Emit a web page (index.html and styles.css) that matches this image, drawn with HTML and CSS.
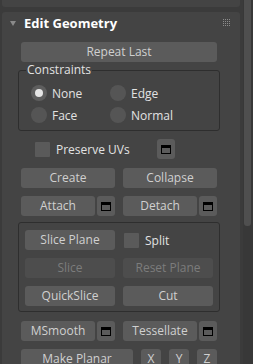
FILE: index.html
```html
<!DOCTYPE html>
<html lang="en">
<head>
  <meta charset="UTF-8">
  <title>Edit Geometry</title>
  <link rel="stylesheet" href="styles.css">
</head>
<body>
  <div class="shell">
    <div class="panels">
      <div class="panel prev"></div>

      <div class="panel">
        <div class="panel-head">
          <span class="arrow"></span>
          <span class="title">Edit Geometry</span>
          <svg class="grip" width="8" height="8" viewBox="0 0 8 8">
            <g fill="#8c8c8c">
              <rect x="0" y="0" width="1" height="1"/><rect x="2" y="0" width="1" height="1"/><rect x="4" y="0" width="1" height="1"/><rect x="6" y="0" width="1" height="1"/>
              <rect x="0" y="2" width="1" height="1"/><rect x="2" y="2" width="1" height="1"/><rect x="4" y="2" width="1" height="1"/><rect x="6" y="2" width="1" height="1"/>
              <rect x="0" y="4" width="1" height="1"/><rect x="2" y="4" width="1" height="1"/><rect x="4" y="4" width="1" height="1"/><rect x="6" y="4" width="1" height="1"/>
              <rect x="0" y="6" width="1" height="1"/><rect x="2" y="6" width="1" height="1"/><rect x="4" y="6" width="1" height="1"/><rect x="6" y="6" width="1" height="1"/>
            </g>
          </svg>
        </div>

        <div class="content">
          <button class="btn full">Repeat Last</button>

          <fieldset class="group constraints">
            <legend>Constraints</legend>
            <div class="radio-grid">
              <label class="radio"><span class="dot on"></span>None</label>
              <label class="radio"><span class="dot"></span>Edge</label>
              <label class="radio"><span class="dot"></span>Face</label>
              <label class="radio"><span class="dot"></span>Normal</label>
            </div>
          </fieldset>

          <div class="row preserve">
            <label class="check"><span class="box"></span>Preserve UVs</label>
            <button class="btn opt"><span class="win"></span></button>
          </div>

          <div class="row after-opt">
            <button class="btn half">Create</button>
            <button class="btn half">Collapse</button>
          </div>

          <div class="row">
            <div class="pair">
              <button class="btn grow">Attach</button>
              <button class="btn opt"><span class="win"></span></button>
            </div>
            <div class="pair">
              <button class="btn grow">Detach</button>
              <button class="btn opt"><span class="win"></span></button>
            </div>
          </div>

          <div class="group slice">
            <div class="row">
              <button class="btn half">Slice Plane</button>
              <label class="check split"><span class="box"></span>Split</label>
            </div>
            <div class="row">
              <button class="btn half off">Slice</button>
              <button class="btn half off">Reset Plane</button>
            </div>
            <div class="row">
              <button class="btn half">QuickSlice</button>
              <button class="btn half">Cut</button>
            </div>
          </div>

          <div class="row after-group">
            <div class="pair">
              <button class="btn grow">MSmooth</button>
              <button class="btn opt"><span class="win"></span></button>
            </div>
            <div class="pair">
              <button class="btn grow">Tessellate</button>
              <button class="btn opt"><span class="win"></span></button>
            </div>
          </div>

          <div class="row">
            <button class="btn planar">Make Planar</button>
            <button class="btn axis">X</button>
            <button class="btn axis">Y</button>
            <button class="btn axis">Z</button>
          </div>
        </div>
      </div>
    </div>

    <div class="scrollbar">
      <div class="thumb"></div>
    </div>
  </div>
</body>
</html>
```

FILE: styles.css
```css
body {
  margin: 0;
  background: #3b3b3b;
  font-family: 'Open Sans', sans-serif;
  font-size: 12px;
  color: #e2e2e2;
  overflow: hidden;
}

.shell {
  display: flex;
  height: 364px;
}

.panels {
  width: 240px;
  padding-left: 2px;
  box-sizing: border-box;
}

.panel {
  background: #444444;
  border-radius: 3px;
  height: 400px;
  margin-top: 5px;
}

.panel.prev {
  height: 7px;
  margin-top: 0;
  border-radius: 0 0 3px 3px;
}

.panel-head {
  display: flex;
  align-items: center;
  height: 22px;
  padding: 0 9px 0 8px;
}

.arrow {
  width: 0;
  height: 0;
  border-left: 3.5px solid transparent;
  border-right: 3.5px solid transparent;
  border-top: 5px solid #8a8a8a;
  margin-top: 1px;
}

.title {
  flex: 1;
  margin-left: 8px;
  font-weight: bold;
  font-size: 13px;
  color: #ffffff;
}

.grip {
  display: block;
}

.content {
  padding: 8px 23px 0 19px;
}

.btn {
  display: block;
  height: 20px;
  padding: 0;
  border: none;
  border-radius: 3px;
  background: #5b5b5b;
  color: #d0d0d0;
  font-family: inherit;
  font-size: 12px;
  line-height: 20px;
  box-sizing: border-box;
}

.btn.full { width: 100%; }
.btn.half { width: 94px; }
.btn.grow { flex: 1; }
.btn.planar { width: 112px; }
.btn.axis { width: 20px; }

.btn.off {
  background: #4d4d4d;
  color: #7c7c7c;
}

.btn.opt {
  width: 18px;
  display: flex;
  align-items: center;
  justify-content: center;
}

.win {
  width: 10px;
  height: 9px;
  border: 1px solid #000;
  border-top-width: 3px;
  box-sizing: border-box;
}

.row {
  display: flex;
  gap: 8px;
  margin-top: 8px;
}

.row.after-opt { margin-top: 9px; }
.row.after-group { margin-top: 9px; }

.pair {
  display: flex;
  gap: 2px;
  width: 94px;
}

.group {
  border: 1px solid #2e2e2e;
  border-radius: 3px;
  margin: 0 -3px;
  min-width: 0;
}

.constraints {
  margin-top: 0;
  padding: 0 6px 7px;
}

.constraints legend {
  padding: 0 1px;
  margin-left: 1px;
  line-height: 16px;
}

.radio-grid {
  display: grid;
  grid-template-columns: 79px 1fr;
  row-gap: 6px;
  padding: 7px 0 0 6px;
}

.radio {
  display: flex;
  align-items: center;
  gap: 5px;
  height: 16px;
}

.dot {
  width: 16px;
  height: 16px;
  border-radius: 50%;
  background: #555555;
  display: flex;
  align-items: center;
  justify-content: center;
}

.dot.on {
  background: #5e5e5e;
}

.dot.on::after {
  content: "";
  width: 8px;
  height: 8px;
  border-radius: 50%;
  background: #e6e6e6;
}

.check {
  display: flex;
  align-items: center;
  gap: 6px;
}

.box {
  width: 15px;
  height: 15px;
  background: #5a5a5a;
  border-radius: 1px;
}

.preserve {
  height: 20px;
  padding-left: 14px;
  gap: 0;
}

.preserve .check {
  width: 122px;
}

.split {
  padding-left: 1px;
}

.slice {
  margin-top: 6px;
  padding: 0 6px 5px;
}

.slice .row:first-child {
  margin-top: 7px;
}

.slice .btn.half { width: 90px; }

.scrollbar {
  margin-left: 3px;
  width: 10px;
  background: #383838;
}

.thumb {
  margin-left: 1px;
  width: 7px;
  height: 226px;
  background: #4f4f4f;
  border-radius: 0 0 3px 3px;
}
```
